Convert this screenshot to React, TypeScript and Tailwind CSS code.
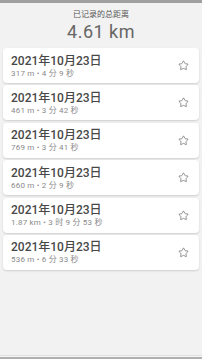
import { Star } from "lucide-react"

const runs = [
  { date: "2021年10月23日", detail: "317 m • 4 分 9 秒" },
  { date: "2021年10月23日", detail: "461 m • 3 分 42 秒" },
  { date: "2021年10月23日", detail: "769 m • 3 分 41 秒" },
  { date: "2021年10月23日", detail: "660 m • 2 分 9 秒" },
  { date: "2021年10月23日", detail: "1.87 km • 3 时 9 分 53 秒" },
  { date: "2021年10月23日", detail: "536 m • 6 分 33 秒" },
]

export default function App() {
  return (
    <div
      className="h-[359px] w-[202px] flex flex-col bg-[#f2f2f2] overflow-hidden"
      style={{ fontFamily: '"Roboto", "Noto Sans CJK SC", sans-serif' }}
    >
      {/* status bar */}
      <div className="h-[3px] bg-[#a0a0a0] shrink-0" />

      {/* summary */}
      <div className="flex flex-col items-center pt-[7px]">
        <div className="text-[8px] leading-[10px] text-[#555]">已记录的总距离</div>
        <div className="text-[18px] leading-[20px] text-[#666] mt-[2px] tracking-[0.5px]">4.61 km</div>
      </div>

      {/* list */}
      <div className="flex flex-col gap-[2.4px] px-[3px] mt-[6px]">
        {runs.map((r, i) => (
          <div
            key={i}
            className="h-[35px] bg-white rounded-[4px] shadow-[0_1px_2px_rgba(0,0,0,0.15)] flex items-center pl-[8px] pr-[10px]"
          >
            <div className="flex-1 flex flex-col pt-[1px]">
              <div className="text-[12px] leading-[14px] font-medium text-[#484848]">{r.date}</div>
              <div className="text-[8px] leading-[10px] text-[#8a8a8a] mt-[1px] tracking-[0.2px]">{r.detail}</div>
            </div>
            <Star className="w-[11px] h-[11px] text-[#666]" strokeWidth={1.5} />
          </div>
        ))}
      </div>

      <div className="flex-1" />
      {/* nav bar */}
      <div className="h-[1px] bg-[#e0e0e0] shrink-0" />
      <div className="h-[1px] bg-[#f7f7f7] shrink-0" />
      <div className="h-[2px] bg-[#b0b0b0] shrink-0" />
    </div>
  )
}
